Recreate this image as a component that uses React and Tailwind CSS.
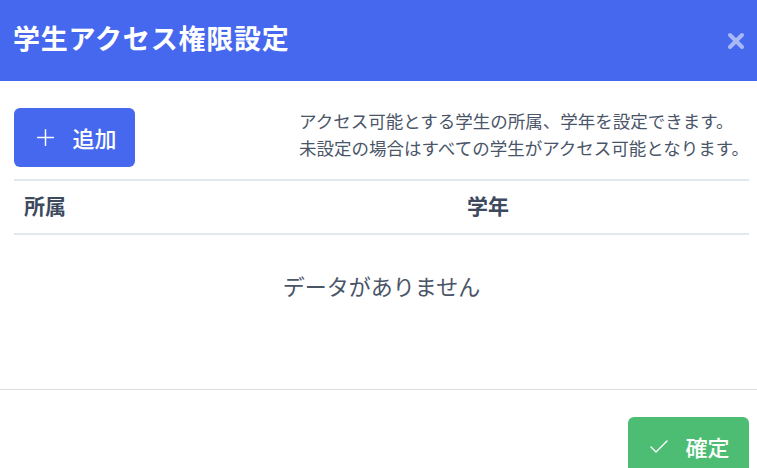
import { Plus, Check } from 'lucide-react';

const font = { fontFamily: '"Noto Sans CJK JP", "Noto Sans", sans-serif' };

export default function App() {
    return (
        <div className="w-[757px] h-[468px] overflow-hidden bg-white" style={font}>
            {/* ヘッダー */}
            <div className="h-[81px] bg-[#4568ee] flex items-center justify-between pl-[13px] pr-[12px] pb-[6px]">
                <h1 className="text-[27px] font-bold text-white leading-none tracking-[0.8px]">学生アクセス権限設定</h1>
                <svg width="18" height="18" viewBox="0 0 18 18" className="mt-[6px]">
                    <path d="M3 3 L15 15 M15 3 L3 15" stroke="#a9b9f8" strokeWidth="4" strokeLinecap="round" />
                </svg>
            </div>

            {/* 本体 */}
            <div className="h-[309px] border-b border-[#dcdce2] pl-[14px] pr-[8px] pt-[27px]">
                <div className="flex items-start justify-between">
                    <button className="w-[121px] h-[59px] rounded-[6px] bg-[#4568ee] text-white flex items-center justify-center gap-[13px]">
                        <Plus size={27} strokeWidth={1.3} />
                        <span className="text-[22px] font-medium">追加</span>
                    </button>
                    <p className="text-[17.5px] leading-[27px] text-[#4a5568] text-left -mt-[1px]">
                        アクセス可能とする学生の所属、学年を設定できます。<br />
                        未設定の場合はすべての学生がアクセス可能となります。
                    </p>
                </div>

                <div className="mt-[12px]">
                    <div className="flex h-[56px] items-center border-t-2 border-b-2 border-[#e2e8f0] text-[21px] font-bold text-[#3d4a5e] pb-[3px]">
                        <div className="w-[443px] pl-[10px]">所属</div>
                        <div className="pl-[10px]">学年</div>
                    </div>
                    <div className="h-[102px] flex items-center justify-center pb-[2px]">
                        <span className="text-[22px] text-[#4a5568]">データがありません</span>
                    </div>
                </div>
            </div>

            {/* フッター */}
            <div className="flex justify-end pr-[8px] pt-[27px]">
                <button className="w-[121px] h-[59px] rounded-[6px] bg-[#4dbd74] text-white flex items-center justify-center gap-[14px]">
                    <Check size={24} strokeWidth={1.4} />
                    <span className="text-[22px] font-medium">確定</span>
                </button>
            </div>
        </div>
    );
}
